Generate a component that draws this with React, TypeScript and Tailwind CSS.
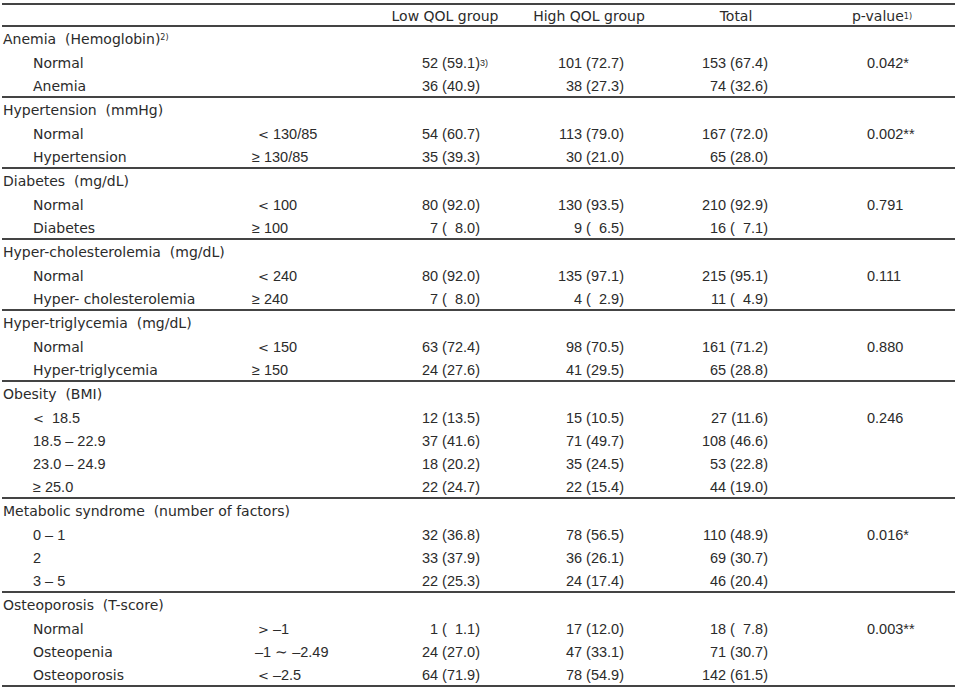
import React from "react";

type Row = [string, string, string, string, string, string];

const FS = "\u2007";

const GROUPS: { title: string; unit: string; sup?: string; numLabels?: boolean; rows: Row[] }[] = [
  {
    title: "Anemia",
    unit: "(Hemoglobin)",
    sup: "2)",
    rows: [
      ["Normal", "", "52 (59.1)", "101 (72.7)", "153 (67.4)", "0.042*"],
      ["Anemia", "", "36 (40.9)", "38 (27.3)", "74 (32.6)", ""],
    ],
  },
  {
    title: "Hypertension",
    unit: "(mmHg)",
    rows: [
      ["Normal", "< 130/85", "54 (60.7)", "113 (79.0)", "167 (72.0)", "0.002**"],
      ["Hypertension", "≥ 130/85", "35 (39.3)", "30 (21.0)", "65 (28.0)", ""],
    ],
  },
  {
    title: "Diabetes",
    unit: "(mg/dL)",
    rows: [
      ["Normal", "< 100", "80 (92.0)", "130 (93.5)", "210 (92.9)", "0.791"],
      ["Diabetes", "≥ 100", `7 (${FS}8.0)`, `9 (${FS}6.5)`, `16 (${FS}7.1)`, ""],
    ],
  },
  {
    title: "Hyper-cholesterolemia",
    unit: "(mg/dL)",
    rows: [
      ["Normal", "< 240", "80 (92.0)", "135 (97.1)", "215 (95.1)", "0.111"],
      ["Hyper- cholesterolemia", "≥ 240", `7 (${FS}8.0)`, `4 (${FS}2.9)`, `11 (${FS}4.9)`, ""],
    ],
  },
  {
    title: "Hyper-triglycemia",
    unit: "(mg/dL)",
    rows: [
      ["Normal", "< 150", "63 (72.4)", "98 (70.5)", "161 (71.2)", "0.880"],
      ["Hyper-triglycemia", "≥ 150", "24 (27.6)", "41 (29.5)", "65 (28.8)", ""],
    ],
  },
  {
    title: "Obesity",
    unit: "(BMI)",
    numLabels: true,
    rows: [
      ["< 18.5", "", "12 (13.5)", "15 (10.5)", "27 (11.6)", "0.246"],
      ["18.5 – 22.9", "", "37 (41.6)", "71 (49.7)", "108 (46.6)", ""],
      ["23.0 – 24.9", "", "18 (20.2)", "35 (24.5)", "53 (22.8)", ""],
      ["≥ 25.0", "", "22 (24.7)", "22 (15.4)", "44 (19.0)", ""],
    ],
  },
  {
    title: "Metabolic syndrome",
    unit: "(number of factors)",
    numLabels: true,
    rows: [
      ["0 – 1", "", "32 (36.8)", "78 (56.5)", "110 (48.9)", "0.016*"],
      ["2", "", "33 (37.9)", "36 (26.1)", "69 (30.7)", ""],
      ["3 – 5", "", "22 (25.3)", "24 (17.4)", "46 (20.4)", ""],
    ],
  },
  {
    title: "Osteoporosis",
    unit: "(T-score)",
    rows: [
      ["Normal", "> –1", `1 (${FS}1.1)`, "17 (12.0)", `18 (${FS}7.8)`, "0.003**"],
      ["Osteopenia", "–1 ∼ –2.49", "24 (27.0)", "47 (33.1)", "71 (30.7)", ""],
      ["Osteoporosis", "< –2.5", "64 (71.9)", "78 (54.9)", "142 (61.5)", ""],
    ],
  },
];

const cols = "grid grid-cols-[250px_139px_108px_180px_114px_162px] items-center";
const label = "font-['DejaVu_Sans',sans-serif] text-[14px]";

// "< 130/85": the less/greater-than sign is drawn wider and sits a little to the right
function Crit({ text, shift = true }: { text: string; shift?: boolean }) {
  if (text[0] === "<" || text[0] === ">") {
    return (
      <span className={shift ? "pl-[6px]" : ""}>
        <span className="font-['DejaVu_Sans',sans-serif] text-[13px]">{text[0]}</span>
        {shift ? text.slice(1) : " " + text.slice(1)}
      </span>
    );
  }
  return <span className={text[0] === "≥" || !shift ? "" : "pl-[3px]"}>{text}</span>;
}

export default function App() {
  return (
    <div className="w-[961px] h-[692px] bg-white pt-[3px] text-[#2b2b2b] text-[14.5px] font-['Liberation_Sans',Arial,sans-serif] overflow-hidden">
      <div className="w-[953px] ml-[2px] border-t-2 border-[#444]">
        {/* header */}
        <div className={`${cols} h-[22px] pt-[1px] border-b-2 border-[#444] ${label}`}>
          <div />
          <div />
          <div className="text-center">Low QOL group</div>
          <div className="text-center">High QOL group</div>
          <div className="text-center">Total</div>
          <div className="text-center pl-[16px]">
            p-value<sup className="text-[8px] relative -top-[2px]">1)</sup>
          </div>
        </div>

        {GROUPS.map((g, gi) => (
          <div key={gi} className="border-b-2 border-[#444]">
            <div className={`h-[23px] pt-[2px] flex items-center pl-[1px] whitespace-pre ${label}`}>
              {g.title}  {g.unit}
              {g.sup && <sup className="text-[8px] relative -top-[2px]">{g.sup}</sup>}
            </div>
            {g.rows.map((r, ri) => (
              <div key={ri} className={`${cols} h-[23px] pt-[3px] whitespace-pre`}>
                <div className={g.numLabels ? "pl-[31px]" : `pl-[31px] ${label}`}>
                  {g.numLabels ? <Crit text={r[0]} shift={false} /> : r[0]}
                </div>
                <div>
                  <Crit text={r[1]} />
                </div>
                <div className="text-right pr-[19px]">
                  {gi === 0 && ri === 0 ? (
                    <span className="-mr-[8px]">
                      {r[2]}
                      <sup className="text-[9px] relative -top-[2px]">3)</sup>
                    </span>
                  ) : (
                    r[2]
                  )}
                </div>
                <div className="text-right pr-[55px]">{r[3]}</div>
                <div className="text-right pr-[25px]">{r[4]}</div>
                <div className="pl-[74px]">{r[5]}</div>
              </div>
            ))}
          </div>
        ))}
      </div>
    </div>
  );
}
